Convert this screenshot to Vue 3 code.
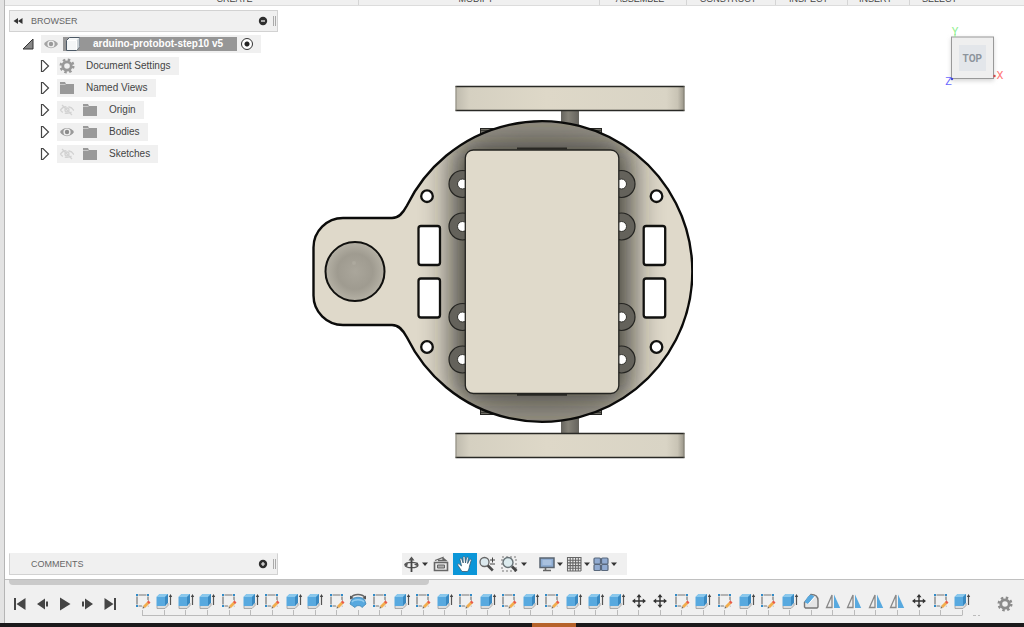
<template>
  <div class="workspace">
    <div class="side-strip"></div>

    <div class="main">
      <header class="toolbar">
        <span v-for="group in toolGroups" :key="group" class="tool-group">{{ group }}</span>
      </header>

      <main class="stage">
        <div class="viewport">
          <aside class="browser">
            <div class="panel-header">
              <button class="collapse" aria-label="Collapse browser">
                <svg width="10" height="8" viewBox="0 0 10 8"><path d="M5 1v6L0.500 4zM9.500 1v6L5 4z" fill="#333" /></svg>
              </button>
              <h2 class="panel-title">BROWSER</h2>
              <button class="round" aria-label="Hide browser">
                <svg width="10" height="10" viewBox="0 0 10 10"><circle cx="5" cy="5" r="4.200" fill="#2e2e2e" /><path d="M3 5h4" stroke="#eee" stroke-width="1.300" /></svg>
              </button>
              <span class="grip"></span>
            </div>

            <ul class="tree">
              <li class="tree-row root">
                <button class="toggle" aria-label="Collapse document" @click="open = !open">
                  <svg width="12" height="12" viewBox="0 0 12 12"><path d="M11 1v10H1z" fill="#888" stroke="#333" /></svg>
                </button>
                <div class="tree-item">
                  <svg class="icon" width="16" height="16" viewBox="0 0 16 16"><path d="M1 8C4 2.500 12 2.500 15 8 12 13.500 4 13.500 1 8z" fill="#a3a3a3" /><circle cx="8" cy="8" r="3.600" fill="#f0f0f0" /><circle cx="8" cy="8" r="2.200" fill="#999" /></svg>
                  <span class="document-name">
                    <svg width="16" height="16" viewBox="0 0 16 16"><path d="M1.500 4.500L4.500 1.500h10v9l-3 4h-10z" fill="#f4f6f7" stroke="#4c5966" /><path d="M11.500 4.500l3-3v9l-3 4z" fill="#ccd2d6" /><path d="M2 4.500h9.500v9.500" fill="none" stroke="#fff" /></svg>
                    <span>arduino-protobot-step10 v5</span>
                  </span>
                  <label class="active-mark">
                    <input type="radio" name="active" checked aria-label="Activate component" />
                  </label>
                </div>
              </li>
              <template v-if="open">
                <li v-for="node in nodes" :key="node.name" class="tree-row">
                  <button class="toggle" :aria-label="'Expand ' + node.name">
                    <svg width="10" height="14" viewBox="0 0 10 14"><path d="M1.500 1.500v11h1.500L8.500 7 3 1.500z" fill="#fff" stroke="#444" stroke-width="1.200" /></svg>
                  </button>
                  <div class="tree-item">
                    <svg v-if="node.eye" class="eye" width="16" height="16" viewBox="0 0 16 16">
                      <template v-if="node.eye === 'on'">
                        <path d="M1 8C4 2.500 12 2.500 15 8 12 13.500 4 13.500 1 8z" fill="#999" />
                        <circle cx="8" cy="8" r="3.600" fill="#f0f0f0" />
                        <circle cx="8" cy="8" r="2.200" fill="#8b8b8b" />
                      </template>
                      <g v-else fill="none" stroke="#d2d2d2" stroke-width="1.300">
                        <path d="M1.500 8C4 3.500 12 3.500 14.500 8 12 12.500 4 12.500 1.500 8z" stroke-dasharray="7 2" />
                        <circle cx="8" cy="8" r="2" />
                        <path d="M3 3l10 10" />
                      </g>
                    </svg>
                    <svg v-if="node.icon === 'gear'" class="icon" width="16" height="16" viewBox="0 0 16 16">
                      <circle cx="8" cy="8" r="4.200" fill="none" stroke="#999" stroke-width="2.800" />
                      <circle cx="8" cy="8" r="6.300" fill="none" stroke="#999" stroke-width="2.400" stroke-dasharray="2.475 2.475" />
                    </svg>
                    <svg v-else class="icon" width="16" height="16" viewBox="0 0 16 16"><path d="M1 2h5l1 2h8v10H1z" fill="#999" /><path d="M1 4.500h5.500" stroke="#c8c8c8" /></svg>
                    <span>{{ node.name }}</span>
                  </div>
                </li>
              </template>
            </ul>
          </aside>

          <svg class="model" width="381" height="374" viewBox="312 85 381 374" role="img" aria-label="Robot chassis, top view">
            <defs>
              <linearGradient id="wheel">
                <stop offset="0" stop-color="#bebaad" />
                <stop offset="0.060" stop-color="#d5d0c1" />
                <stop offset="0.400" stop-color="#ded8c8" />
                <stop offset="0.920" stop-color="#d9d4c5" />
                <stop offset="0.970" stop-color="#c9c4b5" />
                <stop offset="1" stop-color="#969286" />
              </linearGradient>
              <linearGradient id="axle">
                <stop offset="0" stop-color="#65635d" />
                <stop offset="0.400" stop-color="#858278" />
                <stop offset="1" stop-color="#65635d" />
              </linearGradient>
              <radialGradient id="caster">
                <stop offset="0" stop-color="#aaa69b" />
                <stop offset="0.600" stop-color="#9f9b90" />
                <stop offset="1" stop-color="#b5b1a5" />
              </radialGradient>
              <filter id="soft" x="-50%" y="-50%" width="200%" height="200%">
                <feGaussianBlur stdDeviation="16" />
              </filter>
              <clipPath id="plate-clip"><path :d="plate" /></clipPath>
            </defs>

            <rect x="561" y="108" width="18" height="20" fill="url(#axle)" />
            <rect x="561" y="416" width="18" height="18" fill="url(#axle)" />
            <g v-for="y in [86, 433]" :key="y">
              <rect x="455.500" :y="y" width="229" height="24.500" fill="url(#wheel)" />
              <path :d="`M455.500 ${y + 0.500}h229M455.500 ${y + 24.500}h229`" stroke="#292925" stroke-width="1.500" />
              <path :d="`M456 ${y}v25M684 ${y}v25`" stroke="#777469" stroke-width="0.700" />
            </g>
            <rect x="480.500" y="128.500" width="121" height="286" fill="#6f6d65" stroke="#252522" />
            <path d="M481 130.500h120M481 412.500h120" stroke="#3b3b36" />

            <path :d="plate" fill="#dfd9ca" />
            <g clip-path="url(#plate-clip)">
              <ellipse cx="542" cy="113" rx="92" ry="37" fill="#3c3b35" opacity="0.450" filter="url(#soft)" />
              <ellipse cx="542" cy="430" rx="92" ry="37" fill="#3c3b35" opacity="0.450" filter="url(#soft)" />
              <rect x="453" y="142" width="178" height="259" rx="10" fill="#24241f" opacity="0.850" filter="url(#soft)" />
            </g>
            <path :d="plate" fill="none" stroke="#0b0b0a" stroke-width="2.400" />

            <circle cx="355" cy="271.500" r="29.500" fill="url(#caster)" stroke="#10100e" stroke-width="2" />
            <circle cx="354" cy="263" r="2" fill="#bab6ab" opacity="0.400" />

            <template v-for="x in [462.500, 621.500]" :key="x">
              <g v-for="y in [184, 226.500, 317, 359.500]" :key="y">
                <circle :cx="x" :cy="y" r="13.500" fill="#64625b" stroke="#242421" stroke-width="1.200" />
                <circle :cx="x" :cy="y" r="5" fill="#fff" stroke="#353530" />
              </g>
            </template>

            <template v-for="x in [427, 656.500]" :key="x">
              <circle v-for="y in [196.200, 347]" :key="y" :cx="x" :cy="y" r="5.800" fill="#fff" stroke="#11110f" stroke-width="2.300" />
            </template>
            <template v-for="x in [418.500, 643.700]" :key="x">
              <rect v-for="y in [226, 278.500]" :key="y" :x="x" :y="y" width="21.500" height="39" rx="2.500" fill="#fff" stroke="#11110f" stroke-width="2.300" />
            </template>

            <path d="M517 148.500h50M517 394.800h50" stroke="#292824" stroke-width="2" />
            <rect x="465.300" y="150" width="153.500" height="243.500" rx="8" fill="#e0dacb" stroke="#242421" stroke-width="1.300" />
          </svg>

          <svg class="view-cube" width="64" height="66" viewBox="944 24 64 66" role="img" aria-label="View cube">
            <defs>
              <filter id="cube-shadow" x="-30%" y="-30%" width="160%" height="160%"><feGaussianBlur stdDeviation="2" /></filter>
            </defs>
            <rect x="951" y="38" width="43" height="43" fill="#bbb" opacity="0.600" filter="url(#cube-shadow)" />
            <rect x="951.500" y="37" width="42" height="41.500" fill="#efefef" stroke="#999" />
            <rect x="959" y="45" width="27" height="26" fill="#e3e6ea" />
            <text x="972.300" y="61.500" class="face">TOP</text>
            <text x="955" y="35" class="axis y">Y</text>
            <text x="1000" y="79" class="axis x">X</text>
            <text x="948.500" y="85" class="axis z">Z</text>
            <circle cx="994.500" cy="76" r="1.200" fill="#d54a4a" />
            <circle cx="952" cy="79" r="1.200" fill="#4444d8" />
            <path d="M955 34v3" stroke="#8cec8c" />
          </svg>
        </div>

        <div class="stage-footer">
          <div class="panel-header comments">
            <h2 class="panel-title">COMMENTS</h2>
            <button class="round" aria-label="Show comments">
              <svg width="10" height="10" viewBox="0 0 10 10"><circle cx="5" cy="5" r="4.200" fill="#2e2e2e" /><path d="M3 5h4M5 3v4" stroke="#eee" stroke-width="1.200" /></svg>
            </button>
            <span class="grip"></span>
          </div>

          <nav class="nav-bar">
            <button
              v-for="tool in navTools"
              :key="tool.id"
              class="nav-button"
              :class="[tool.id, { active: activeTool === tool.id }]"
              :aria-label="tool.label"
              @click="activeTool = tool.id"
            >
              <svg width="18" height="18" viewBox="0 0 18 18" fill="none">
                <g v-if="tool.id === 'orbit'" stroke="#555" stroke-width="1.300">
                  <ellipse cx="8.500" cy="10" rx="6.500" ry="2.700" />
                  <path d="M8.500 3v14" stroke="#444" stroke-width="1.800" />
                  <path d="M5.500 5.500l3-4 3 4zM11 9.500l4-2v4zM1 9l4-1-1 4z" fill="#555" stroke="none" />
                </g>
                <g v-else-if="tool.id === 'look'" stroke="#666">
                  <path d="M2.500 7.500h13v8h-13z" fill="#e9e9e9" stroke-width="1.600" />
                  <path d="M5.500 10h7v3h-7z" fill="#aaa" />
                  <path d="M3 5.500l8-3v3M11 3l3 2.500H6" stroke-width="1.300" />
                </g>
                <path
                  v-else-if="tool.id === 'pan'"
                  d="M6 16.500L2 10.500c-1-1.500.6-2.200 1.600-1.200L5.500 11 4 4.500c-.2-1.500 1.400-1.700 1.800-.3L7.200 8 7 2.500c0-1.500 1.900-1.500 2 0L9.500 8l1-5c.3-1.400 2-1 1.800.3l-.7 5.200 1.900-3.700c.7-1.200 2.100-.5 1.700.7L13.500 11c-.3 2.500-.8 4-2 5.500z"
                  fill="#fff" stroke="#3b5a70" stroke-width="0.800"
                />
                <g v-else-if="tool.id === 'zoom'">
                  <circle cx="6.500" cy="7" r="4.500" fill="#dce9ee" stroke="#666" stroke-width="1.300" />
                  <path d="M9.800 10.500l5 5" stroke="#4b4b4b" stroke-width="2.600" />
                  <path d="M12 5h5M14.500 2.500v5M12 9h5" stroke="#444" />
                </g>
                <g v-else-if="tool.id === 'fit'">
                  <path d="M2 2h14v14H2z" stroke="#777" stroke-dasharray="2 2" />
                  <circle cx="8" cy="7.500" r="5" fill="#dcebee" stroke="#687276" stroke-width="1.400" />
                  <path d="M12 11.500l4.500 4.500" stroke="#444" stroke-width="2.800" />
                </g>
                <g v-else-if="tool.id === 'display'">
                  <path d="M2 3h14v9.500H2z" fill="#8eacd2" stroke="#5a6470" stroke-width="1.500" />
                  <path d="M4.500 5h9v5h-9z" fill="#a9c1df" />
                  <path d="M7.500 13v2M5 15.500h8" stroke="#666" stroke-width="1.600" />
                </g>
                <g v-else-if="tool.id === 'grid'">
                  <path d="M2 2h14v14H2z" fill="#eee" />
                  <path d="M2 2.500h14M2 5.200h14M2 7.900h14M2 10.600h14M2 13.300h14M2 16h14M2.500 2v14M5.200 2v14M7.900 2v14M10.600 2v14M13.300 2v14M16 2v14" stroke="#666" stroke-width="1.100" />
                </g>
                <g v-else fill="#91abd1" stroke="#59687c" stroke-width="1.200">
                  <rect x="2" y="3" width="6.500" height="6" rx="1" />
                  <rect x="9.500" y="3" width="6.500" height="6" rx="1" />
                  <rect x="2" y="9.500" width="6.500" height="6" rx="1" />
                  <rect x="9.500" y="9.500" width="6.500" height="6" rx="1" />
                </g>
              </svg>
              <svg v-if="tool.menu" width="6" height="18" viewBox="0 0 6 18"><path d="M0 7.500h6L3 11z" fill="#333" /></svg>
            </button>
          </nav>
        </div>
      </main>

      <footer class="timeline">
        <div class="scroll-track"><div class="scroll-thumb"></div></div>
        <div class="timeline-row">
          <div class="playback">
            <button v-for="control in playback" :key="control.label" :aria-label="control.label">
              <svg width="16" height="16" viewBox="0 0 16 16"><path :d="control.path" fill="#454545" /></svg>
            </button>
          </div>

          <ol class="steps">
            <li v-for="(step, index) in steps" :key="index" class="step">
              <svg width="18" height="18" viewBox="0 0 18 18" fill="none">
                <g v-if="step === 's'">
                  <path d="M3 3h11v11H3z" stroke="#777" stroke-width="1.200" />
                  <path d="M1.500 1.500h3v3h-3zM12.500 1.500h3v3h-3zM1.500 12.500h3v3h-3z" fill="#f1f1f1" />
                  <path d="M2 2h2v2H2zM13 2h2v2h-2zM2 13h2v2H2z" fill="#318bc8" />
                  <path d="M9.500 15.500l5.500-6" stroke="#f1f1f1" stroke-width="5" />
                  <path d="M10 15l4.500-4.500" stroke="#f2ae4e" stroke-width="2.800" />
                  <path d="M14 11l1.500-1.500" stroke="#e85b4c" stroke-width="2.800" />
                  <path d="M8.500 16.500l.6-2.200 1.600 1.600z" fill="#796957" />
                </g>
                <g v-else-if="step === 'e'">
                  <path d="M2 14v2.500h8l3-3v-2.500" fill="#ddd" stroke="#999" stroke-width="0.800" />
                  <path d="M1.500 5l3-3h8.500v8.500l-3 3.500H1.500z" fill="#58a9df" />
                  <path d="M1.500 5l3-3h8.500l-3 3z" fill="#8bc8ec" />
                  <path d="M10 5l3-3v8.500l-3 3.500z" fill="#3989c1" />
                  <path d="M15.500 4v9" stroke="#555" stroke-width="1.200" />
                  <path d="M13.800 5l1.700-3 1.700 3z" fill="#444" />
                </g>
                <g v-else-if="step === 'r'">
                  <path d="M2 9c1-5 13-5 14 0l1 3-4 3.500c-1-2.500-6-2.500-7 0L1 12z" fill="#58a9df" stroke="#4287b5" stroke-width="0.800" />
                  <path d="M3 10c2-3 10-3 12 0" stroke="#94cdef" stroke-width="1.500" />
                  <path d="M2 5.500C5 1.500 13 1.500 16 5.500" stroke="#666" stroke-width="1.300" />
                  <path d="M1 3.500v4l3.500-1.500zM17 3.500v4l-3.500-1.500z" fill="#555" />
                </g>
                <g v-else-if="step === 'm'">
                  <path d="M9 4v10M4 9h10" stroke="#333" stroke-width="1.400" />
                  <path d="M9 2L6.500 5.200h5zM9 16l-2.500-3.200h5zM2 9l3.200-2.500v5zM16 9l-3.200-2.500v5z" fill="#333" />
                </g>
                <g v-else-if="step === 'f'">
                  <path d="M2.500 10.500L9 2.500c4 0 7 2 7 6V15l-1 1H3.500l-1-1z" fill="#e5e5e5" stroke="#777" stroke-width="1.400" />
                  <path d="M2.500 10l3.500-5.500 3-2 3.500 2-6.500 7.500z" fill="#58a9df" />
                  <path d="M6.500 12l6.500-7.500" stroke="#fff" />
                </g>
                <g v-else>
                  <path d="M8 3v12.500H2.500z" fill="#eee" stroke="#888" stroke-width="1.300" />
                  <path d="M10 2.500v13.500h6.200z" fill="#58a9df" />
                </g>
              </svg>
              <span class="tick"><i></i><i></i></span>
            </li>
          </ol>

          <div class="timeline-end">
            <span class="dashes"></span>
            <button class="settings" aria-label="Timeline settings">
              <svg width="16" height="16" viewBox="0 0 16 16">
                <circle cx="8" cy="8" r="4.200" fill="none" stroke="#8b8b8b" stroke-width="2.800" />
                <circle cx="8" cy="8" r="6.300" fill="none" stroke="#8b8b8b" stroke-width="2.400" stroke-dasharray="2.475 2.475" />
              </svg>
            </button>
          </div>
        </div>
      </footer>
    </div>

    <div class="taskbar"><span class="task"></span></div>
  </div>
</template>

<script setup>
import { ref } from 'vue'

const open = ref(true)
const activeTool = ref('pan')

const toolGroups = ['CREATE', 'MODIFY', 'ASSEMBLE', 'CONSTRUCT', 'INSPECT', 'INSERT', 'SELECT']

const nodes = [
  { name: 'Document Settings', icon: 'gear' },
  { name: 'Named Views', icon: 'folder' },
  { name: 'Origin', icon: 'folder', eye: 'off' },
  { name: 'Bodies', icon: 'folder', eye: 'on' },
  { name: 'Sketches', icon: 'folder', eye: 'off' }
]

const navTools = [
  { id: 'orbit', label: 'Orbit', menu: true },
  { id: 'look', label: 'Look at' },
  { id: 'pan', label: 'Pan' },
  { id: 'zoom', label: 'Zoom' },
  { id: 'fit', label: 'Fit', menu: true },
  { id: 'display', label: 'Display settings', menu: true },
  { id: 'grid', label: 'Grid and snaps', menu: true },
  { id: 'views', label: 'Viewports', menu: true }
]

const playback = [
  { label: 'Go to start', path: 'M2 2h2v12H2zM13.500 2v12L4.500 8z' },
  { label: 'Step back', path: 'M10 2.500v11L2 8zM11 5.500h2v5h-2z' },
  { label: 'Play', path: 'M3 1.500v13L13.500 8z' },
  { label: 'Step forward', path: 'M6 2.500v11l8-5.500zM3 5.500h2v5H3z' },
  { label: 'Go to end', path: 'M2.500 2v12l9-6zM12 2h2v12h-2z' }
]

// s = sketch, e = extrude, r = revolve, m = move, f = fillet, i = mirror
const steps = 'seeeseseesrseseseseseeemmsesesefiiiimse'.split('')

// outline of the base plate: round deck with the caster tab on its left
const plate = 'M343 218H392C399 218 403 213 407 205.500A150.300 150.300 0 1 1 407 337.500C403 330 399 325 392 325H343A29.500 29.500 0 0 1 313.500 295.500V247.500A29.500 29.500 0 0 1 343 218Z'
</script>

<style>
body {
  margin: 0;
}
</style>

<style scoped>
.workspace {
  display: grid;
  grid-template-columns: 4px minmax(0, 1fr);
  grid-template-rows: 1fr 4px;
  min-height: 100vh;
  background: #fff;
  color: #444;
  font: 10px/18px "Liberation Sans", Arial, sans-serif;
}

.side-strip {
  background: #e3e3e3;
}

.main {
  display: flex;
  flex-direction: column;
  border-left: 1px solid #b5b5b5;
}

button {
  display: flex;
  align-items: center;
  justify-content: center;
  padding: 0;
  border: none;
  background: none;
  cursor: pointer;
}

/* Toolbar, scrolled up so that only the foot of the labels shows */
.toolbar {
  display: grid;
  grid-template-columns: 242fr 241fr 87fr 89fr 72fr 62fr 65fr;
  align-content: end;
  height: 5px;
  padding: 0 49px 0 112px;
  overflow: hidden;
  background: #f0f0f0;
  border-bottom: 1px solid #dcdcdc;
}

.tool-group {
  padding-right: 6px;
  border-right: 1px solid #d5d5d5;
  font-size: 9px;
  line-height: 12px;
  text-align: center;
}

.tool-group:last-child {
  border-right: none;
}

/* Stage */
.stage {
  display: flex;
  flex: 1;
  flex-direction: column;
  padding: 4px;
}

.viewport {
  display: flex;
  flex: 1;
  align-items: flex-start;
}

.browser {
  width: 269px;
}

.panel-header {
  display: flex;
  box-sizing: border-box;
  align-items: center;
  height: 22px;
  padding: 0 1px 0 3px;
  background: #f0f0f0;
  border: 1px solid #d2d2d2;
}

.panel-title {
  flex: 1;
  margin: 0 0 0 8px;
  color: #666;
  font-size: 9px;
  font-weight: normal;
}

.grip {
  width: 1px;
  height: 10px;
  margin-left: 5px;
  border: 1px solid #aaa;
  border-width: 0 1px;
}

.tree {
  display: flex;
  flex-direction: column;
  gap: 4px;
  margin: 3px 0 0;
  padding: 0;
  list-style: none;
}

.tree-row {
  display: flex;
  align-items: center;
  gap: 7px;
  padding-left: 31px;
}

.tree-row.root {
  padding-left: 13px;
}

.tree-item {
  display: flex;
  align-items: center;
  height: 18px;
  padding: 0 8px 0 2px;
  background: #f0f0f0;
}

.tree-item .eye {
  margin-right: 7px;
}

.tree-item .icon {
  margin-right: 11px;
}

.root .tree-item .icon {
  margin-right: 4px;
}

.document-name {
  display: flex;
  align-items: center;
  gap: 12px;
  height: 14px;
  padding: 0 14px 0 2px;
  background: #969696;
  color: #fff;
  font-weight: bold;
}

.active-mark {
  display: flex;
  margin-left: 4px;
}

.active-mark input {
  width: 12px;
  height: 12px;
  margin: 0;
  appearance: none;
  border: 1px solid #333;
  border-radius: 50%;
  background: radial-gradient(circle, #222 2px, #fff 3px);
}

.model {
  flex: none;
  margin: 75px 0 0 34px;
}

.view-cube {
  flex: none;
  margin: 14px 12px 0 auto;
}

.face {
  fill: #8d949c;
  font: bold 10px Roboto, sans-serif;
  text-anchor: middle;
}

.axis {
  font: 11px Roboto, sans-serif;
  text-anchor: middle;
}

.axis.x {
  fill: #f77;
}

.axis.y {
  fill: #8ff08f;
}

.axis.z {
  fill: #66f;
}

.stage-footer {
  display: grid;
  grid-template-columns: 1fr auto 1fr;
  align-items: end;
}

.comments {
  width: 269px;
  padding-left: 13px;
  border-top-color: #f0f0f0;
}

.nav-bar {
  display: flex;
  height: 22px;
  padding-right: 9px;
  background: #f0f0f0;
}

.nav-button {
  gap: 1px;
  width: 27px;
}

.nav-button.look,
.nav-button.pan {
  width: 24px;
}

.nav-button.zoom {
  width: 20px;
}

.nav-button.fit {
  gap: 3px;
  width: 33px;
}

.nav-button.display {
  margin-left: 7px;
}

.nav-button.active {
  background: #0b96d8;
}

/* Timeline */
.timeline {
  background: #f0f0f0;
  border-top: 1px solid #c0c0c0;
}

.scroll-track {
  height: 5px;
  padding-left: 4px;
}

.scroll-thumb {
  width: 41.4%;
  height: 5px;
  border-radius: 0 0 4px 4px;
  background: #cacaca;
}

.timeline-row {
  display: flex;
  align-items: center;
  height: 38px;
  padding-left: 4px;
}

.playback {
  display: grid;
  grid-template-columns: repeat(5, 1fr);
  width: 112px;
  margin-right: 11px;
}

.steps {
  display: flex;
  flex: 1;
  height: 24px;
  margin: 0;
  padding: 0;
  list-style: none;
}

.step {
  display: flex;
  flex: 1;
  flex-direction: column;
  align-items: center;
}

.tick {
  display: flex;
  width: 100%;
  height: 6px;
}

.tick i {
  flex: 1;
  border-bottom: 1px solid #bbb;
}

.tick i + i {
  border-left: 1px solid #bbb;
}

.step:first-child .tick i:first-child,
.step:last-child .tick i:last-child {
  border-bottom-color: transparent;
}

.timeline-end {
  display: flex;
  align-items: center;
  width: 51px;
  height: 24px;
}

.dashes {
  align-self: flex-end;
  width: 7px;
  height: 1px;
  background: repeating-linear-gradient(to right, #bbb 0 3px, transparent 3px 5px);
}

.settings {
  margin-left: 17px;
}

/* Taskbar */
.taskbar {
  grid-column: 1 / -1;
  padding-left: 52%;
  background: #1b191b;
}

.task {
  display: block;
  width: 44px;
  height: 4px;
  background: #b5622a;
}
</style>
